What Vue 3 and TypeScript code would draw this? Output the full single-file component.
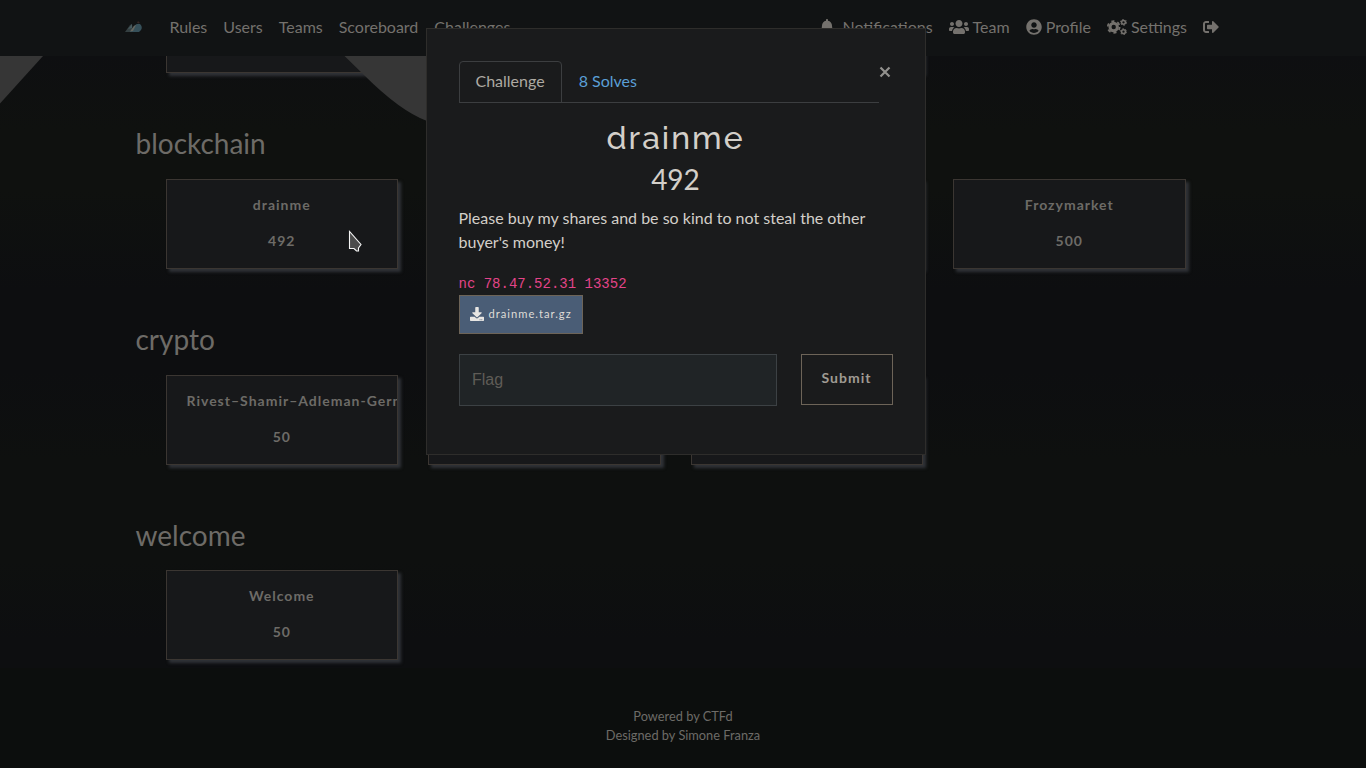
<script setup lang="ts">
interface Challenge { name: string; value: string }
interface Category { title: string; items: Challenge[] }

const links: string[] = ['Rules', 'Users', 'Teams', 'Scoreboard', 'Challenges']
const categories: Category[] = [
  {
    title: 'blockchain',
    items: [
      { name: 'drainme', value: '492' },
      { name: '', value: '' },
      { name: '', value: '' },
      { name: 'Frozymarket', value: '500' },
    ],
  },
  {
    title: 'crypto',
    items: [
      { name: 'Rivest–Shamir–Adleman-Germain', value: '50' },
      { name: '', value: '' },
      { name: '', value: '' },
    ],
  },
  { title: 'welcome', items: [{ name: 'Welcome', value: '50' }] },
]
</script>

<template>
  <div class="page">
    <nav class="navbar">
      <div class="nav-left">
        <svg class="logo" width="18" height="14" viewBox="0 0 18 14">
          <path d="M0 12 L5 5 L7 4 L8 12Z" fill="#343f41" />
          <path d="M3 9 L7 4 L7 8Z" fill="#46595e" />
          <path d="M5 12 L9 6 Q12 3 15 4 Q18 7 16 10 L14 12Z" fill="#36505a" />
          <path d="M5 11.500 L9 6 L11 5 L8 11Z" fill="#66665f" />
          <path d="M12 2.500 L13 1.500 L15 2.500Z" fill="#5a3a35" />
        </svg>
        <a v-for="l in links" :key="l">{{ l }}</a>
      </div>
      <div class="nav-right">
        <a class="notif">
          <svg width="14" height="16" viewBox="0 0 448 512"><path d="M224 512c35.320 0 63.970-28.650 63.970-64H160.030c0 35.350 28.650 64 63.970 64zm215.390-149.710c-19.320-20.760-55.470-51.990-55.470-154.290 0-77.700-54.480-139.900-127.940-155.160V32c0-17.670-14.320-32-31.980-32s-31.980 14.330-31.980 32v20.840C118.560 68.100 64.080 130.300 64.080 208c0 102.300-36.150 133.530-55.470 154.290-6 6.450-8.660 14.160-8.610 21.710.11 16.400 12.980 32 32.100 32h383.800c19.120 0 32-15.600 32.100-32 .05-7.550-2.610-15.270-8.610-21.710z" /></svg>
          <span>Notifications</span>
        </a>
        <a class="team">
          <svg width="20" height="16" viewBox="0 0 640 512"><path d="M96 224c35.300 0 64-28.700 64-64s-28.700-64-64-64-64 28.700-64 64 28.700 64 64 64zm448 0c35.300 0 64-28.700 64-64s-28.700-64-64-64-64 28.700-64 64 28.700 64 64 64zm32 32h-64c-17.600 0-33.500 7.100-45.100 18.600 40.300 22.100 68.900 62 75.100 109.400h66c17.700 0 32-14.300 32-32v-32c0-35.300-28.700-64-64-64zm-256 0c61.900 0 112-50.100 112-112S381.900 32 320 32 208 82.100 208 144s50.100 112 112 112zm76.800 32h-8.300c-20.800 10-43.900 16-68.500 16s-47.600-6-68.500-16h-8.300C179.600 288 128 339.600 128 403.200V432c0 26.500 21.500 48 48 48h288c26.500 0 48-21.500 48-48v-28.800c0-63.600-51.600-115.200-115.200-115.200zm-223.700-13.400C161.500 263.100 145.600 256 128 256H64c-35.300 0-64 28.700-64 64v32c0 17.700 14.300 32 32 32h65.900c6.300-47.400 34.900-87.300 75.200-109.400z" /></svg>
          <span>Team</span>
        </a>
        <a class="profile">
          <svg width="16" height="16" viewBox="0 0 496 512"><path d="M248 8C111 8 0 119 0 256s111 248 248 248 248-111 248-248S385 8 248 8zm0 96c48.600 0 88 39.400 88 88s-39.400 88-88 88-88-39.400-88-88 39.400-88 88-88zm0 344c-58.700 0-111.300-26.600-146.500-68.200 18.800-35.400 55.600-59.800 98.500-59.800 2.400 0 4.800.4 7.100 1.100 13 4.200 26.600 6.900 40.900 6.900 14.300 0 28-2.700 40.900-6.900 2.300-.7 4.700-1.100 7.100-1.100 42.900 0 79.700 24.400 98.500 59.800C359.300 421.400 306.700 448 248 448z" /></svg>
          <span>Profile</span>
        </a>
        <a class="settings">
          <svg width="20" height="16" viewBox="0 0 20 16">
            <g fill="none" stroke="currentColor">
              <circle cx="6.700" cy="8" r="3.700" stroke-width="3" />
              <circle cx="6.700" cy="8" r="5.900" stroke-width="1.800" stroke-dasharray="3.100 3.080" />
              <circle cx="16.500" cy="3.300" r="1.900" stroke-width="1.500" />
              <circle cx="16.500" cy="3.300" r="3" stroke-width="1" stroke-dasharray="1.600 1.540" />
              <circle cx="16.500" cy="12.700" r="1.900" stroke-width="1.500" />
              <circle cx="16.500" cy="12.700" r="3" stroke-width="1" stroke-dasharray="1.600 1.540" />
            </g>
          </svg>
          <span>Settings</span>
        </a>
        <a class="logout">
          <svg width="16" height="16" viewBox="0 0 512 512"><path d="M497 273L329 441c-15 15-41 4.500-41-17v-96H152c-13.300 0-24-10.700-24-24v-96c0-13.300 10.700-24 24-24h136V88c0-21.400 25.900-32 41-17l168 168c9.300 9.400 9.300 24.600 0 34zM192 436v-40c0-6.600-5.400-12-12-12H96c-17.700 0-32-14.300-32-32V160c0-17.700 14.300-32 32-32h84c6.600 0 12-5.400 12-12V76c0-6.600-5.400-12-12-12H96c-53 0-96 43-96 96v192c0 53 43 96 96 96h84c6.600 0 12-5.400 12-12z" /></svg>
        </a>
      </div>
    </nav>

    <main class="content">
      <div class="cards clipped">
        <div v-for="n in 3" :key="n" class="card stub"></div>
      </div>
      <section v-for="c in categories" :key="c.title" class="category">
        <h3>{{ c.title }}</h3>
        <div class="cards">
          <div v-for="(item, i) in c.items" :key="i" class="card">
            <p>{{ item.name }}</p>
            <span>{{ item.value }}</span>
          </div>
        </div>
      </section>
    </main>

    <footer class="footer">
      <span>Powered by CTFd</span>
      <span>Designed by Simone Franza</span>
    </footer>

    <svg class="banner" width="600" height="80" viewBox="0 0 600 80">
      <path d="M0 0H43L0 47.500Z" />
      <path d="M344.500 0 L364 19 Q400 55 427 65 L600 80 V0Z" />
    </svg>

    <div class="modal">
      <div class="modal-head">
        <div class="tabs">
          <a class="tab active">Challenge</a>
          <a class="tab">8 Solves</a>
        </div>
        <button class="close" aria-label="Close">
          <svg width="12" height="12" viewBox="0 0 12 12"><path d="M1.500 1.500l9 9M10.500 1.500l-9 9" fill="none" stroke="#92918d" stroke-width="2.200" /></svg>
        </button>
      </div>
      <h2>drainme</h2>
      <h3 class="points">492</h3>
      <p class="desc">Please buy my shares and be so kind to not steal the other buyer's money!</p>
      <code>nc 78.47.52.31 13352</code>
      <a class="file">
        <svg width="14" height="14" viewBox="0 0 512 512"><path d="M216 0h80c13.300 0 24 10.700 24 24v168h87.700c17.800 0 26.700 21.500 14.100 34.100L269.700 378.300c-7.500 7.500-19.800 7.500-27.300 0L90.100 226.100c-12.600-12.600-3.700-34.100 14.100-34.100H192V24c0-13.300 10.700-24 24-24zm296 376v112c0 13.300-10.700 24-24 24H24c-13.300 0-24-10.700-24-24V376c0-13.300 10.700-24 24-24h146.700l49 49c20.100 20.100 52.500 20.100 72.600 0l49-49H488c13.300 0 24 10.700 24 24zm-124 88c0-11-9-20-20-20s-20 9-20 20 9 20 20 20 20-9 20-20zm64 0c0-11-9-20-20-20s-20 9-20 20 9 20 20 20 20-9 20-20z" /></svg>
        <span>drainme.tar.gz</span>
      </a>
      <div class="form">
        <input type="text" placeholder="Flag" />
        <button class="submit">Submit</button>
      </div>
    </div>

    <svg class="cursor" width="14" height="22" viewBox="0 0 14 22">
      <path d="M1.500 1.500V18.500H6L8.500 21H10.500V18L13 14.500Z" fill="#4b4b4b" stroke="#f4f4f4" stroke-width="1.100" />
    </svg>
  </div>
</template>

<style>
body { background: #0e1010; overflow: hidden; }
</style>

<style scoped>
* { box-sizing: border-box; }
.page {
  position: relative;
  width: 1366px;
  height: 768px;
  overflow: hidden;
  display: flex;
  flex-direction: column;
  background: linear-gradient(#0e0f11 56px, #0f110f 130px, #0f110f 190px, #0d0e10 290px, #0d0e10 370px, #0e100f 460px, #0e100f 560px, #0d0e10 640px, #0d0e10 768px);
  font-family: Lato, "Liberation Sans", sans-serif;
  font-size: 16px;
  color: #6d6b67;
}
h2, h3, p { margin: 0; font-weight: 400; }
.navbar {
  position: relative;
  z-index: 1;
  flex: none;
  height: 56px;
  padding: 0 147px 2px 124.500px;
  display: flex;
  justify-content: space-between;
  align-items: center;
  background: #111314;
  color: #74716d;
}
.nav-left, .nav-right { display: flex; align-items: center; }
.nav-left { gap: 16px; }
.nav-left a, .nav-right span { padding-bottom: 2px; }
.logo { margin-right: 11px; }
.nav-right { gap: 16px; }
.nav-right a { display: flex; align-items: center; gap: 4px; }
.nav-right a svg { fill: currentColor; flex: none; }
.nav-right .notif { gap: 8px; }
.content {
  flex: none;
  height: 612px;
  padding: 0 135.500px;
}
.clipped { height: 16.700px; align-items: flex-end; }
.cards { display: flex; gap: 30px; padding-left: 30px; }
.card {
  flex: none;
  width: 232.500px;
  height: 90px;
  padding: 16px 20px;
  overflow: hidden;
  background: #17181a;
  border: 1px solid #3b3632;
  box-shadow: 3px 3px 3px #303338;
  font-size: 14px;
  font-weight: 700;
  letter-spacing: 1px;
  line-height: 18px;
  text-align: center;
  white-space: nowrap;
}
.card p { height: 36px; font-weight: 700; }
.category { height: 195.600px; padding-top: 53.700px; }
.category h3 { height: 52.600px; font-size: 28px; line-height: 34px; }
.footer {
  flex: 1;
  padding-top: 39px;
  display: flex;
  flex-direction: column;
  align-items: center;
  background: #0c0e0d;
  font-size: 12.800px;
  line-height: 19px;
}
.banner { position: absolute; left: 0; top: 56px; fill: #363636; }
.modal {
  position: absolute;
  z-index: 2;
  left: 425.500px;
  top: 28px;
  width: 500px;
  height: 427px;
  padding: 32px;
  display: flex;
  flex-direction: column;
  background: #1a1b1c;
  border: 1px solid #2e2d2b;
  color: #d3cfc9;
}
.modal-head { display: flex; justify-content: space-between; align-items: flex-start; height: 42px; }
.tabs {
  display: flex;
  width: 420px;
  height: 42px;
  border-bottom: 1px solid #3c3e40;
}
.tab { padding: 7px 16px 8px; line-height: 24px; border: 1px solid transparent; color: #5a9fd6; }
.tab.active { height: 42px; border-color: #3c3e40; border-radius: 4px 4px 0 0; color: #aeaaa3; }
.close { margin: 5px 1.500px 0 0; padding: 0; border: 0; background: none; line-height: 0; }
.modal h2 {
  margin-top: 15px;
  height: 40px;
  font-family: Raleway, Lato, sans-serif;
  font-size: 32px;
  font-weight: 500;
  line-height: 40px;
  letter-spacing: 2px;
  text-align: center;
}
.points { margin-top: 4px; height: 34px; font-size: 28px; line-height: 34px; text-align: center; }
.desc { margin-top: 10px; height: 64px; line-height: 24px; }
code {
  margin-top: 2px;
  height: 22px;
  font: 14px/24px "Liberation Mono", monospace;
  color: #e34489;
}
.file {
  margin-top: 1px;
  width: 124px;
  height: 39px;
  padding: 0 0 2px 10px;
  display: flex;
  align-items: center;
  gap: 5px;
  background: #4a5d76;
  border: 1px solid #6d6458;
  color: #dfdcd7;
  font-size: 11.200px;
  letter-spacing: 1px;
  white-space: nowrap;
}
.file svg { fill: #e8e6e3; flex: none; }
.form { margin-top: 20px; display: flex; justify-content: space-between; align-items: flex-start; }
input {
  width: 318px;
  height: 52px;
  padding: 0 12px 0 12.500px;
  background: #202426;
  border: 1px solid #3c4144;
  border-radius: 0;
  font: 16px "Liberation Sans", sans-serif;
  outline: none;
}
input::placeholder { color: #5f5c57; opacity: 1; }
.submit {
  width: 92px;
  height: 51px;
  padding: 0 0 4px;
  background: none;
  border: 1px solid #6d6458;
  color: #a09b93;
  font: 700 14px Lato, sans-serif;
  letter-spacing: 1px;
}
.cursor { position: absolute; z-index: 3; left: 348px; top: 230px; }
</style>
